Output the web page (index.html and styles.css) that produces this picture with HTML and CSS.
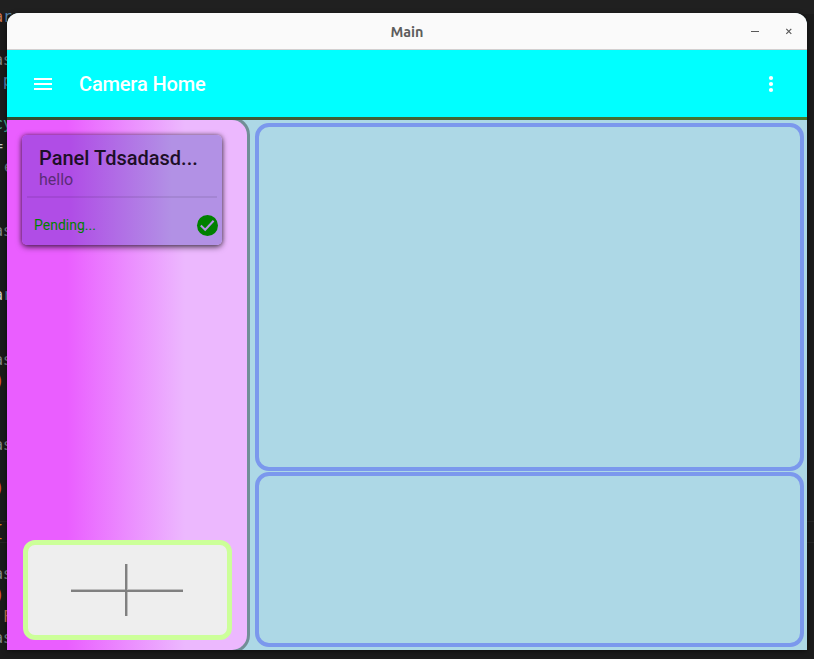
FILE: index.html
```html
<!DOCTYPE html>
<html lang="en">
<head>
<meta charset="utf-8">
<title>Main</title>
<link rel="stylesheet" href="styles.css">
</head>
<body>
<div class="editor" aria-hidden="true">
  <div class="line orange">a<b class="blue">r</b></div><div class="line"></div>
  <div class="line">as</div><div class="line light">:<b class="blue">p</b></div><div class="line"></div>
  <div class="line green">cy</div><div class="line light">=</div><div class="line indent">e</div>
  <div class="line"></div><div class="line"></div><div class="line">as</div>
  <div class="line"></div><div class="line"></div><div class="line light">a<b class="blue">r</b></div>
  <div class="line"></div><div class="line"></div><div class="line">as</div><div class="line orange paren">)</div>
  <div class="line"></div><div class="line"></div><div class="line">as</div>
  <div class="line"></div><div class="line orange paren">)</div><div class="line"></div>
  <div class="line gold current">{</div><div class="line"></div>
  <div class="line">as</div><div class="line orange paren">)</div><div class="line orange">'F</div><div class="line">as</div>
</div>
<main class="window">
  <header class="titlebar">
    <span class="title">Main</span>
    <svg class="controls" width="48" height="12" viewBox="0 0 48 12"><path d="M1 6.5h8" stroke="#595959"/><path d="M36.3 3.8l5 5M41.3 3.8l-5 5" fill="none" stroke="#595959" stroke-width="1.2"/></svg>
  </header>
  <nav class="toolbar">
    <svg width="24" height="24" viewBox="0 0 24 24" fill="#fff"><path d="M3 18h18v-2H3v2zm0-5h18v-2H3v2zm0-7v2h18V6H3z"/></svg>
    <h1>Camera Home</h1>
    <svg class="more" width="24" height="24" viewBox="0 0 24 24" fill="#fff"><circle cx="12" cy="6" r="2.1"/><circle cx="12" cy="12" r="2.1"/><circle cx="12" cy="18" r="2.1"/></svg>
  </nav>
  <div class="content">
    <aside class="sidebar">
      <article class="card">
        <h2>Panel Tdsadasd...</h2>
        <p>hello</p>
        <hr>
        <div class="status"><span>Pending...</span>
          <svg width="22" height="22" viewBox="0 0 22 22"><circle cx="11.5" cy="11.5" r="10.5" fill="#008000"/><path d="M4.8 11.5l4.4 4.3 8.4-9" fill="none" stroke="#b291e5" stroke-width="2"/></svg>
        </div>
      </article>
      <button class="add" aria-label="Add panel">
        <svg width="112" height="52" viewBox="0 0 112 52" fill="#808080"><path d="M54 0h2v52h-2zM0 26h112v2H0z"/><path d="M56 0h1v52h-1zM0 25h112v1H0z" opacity=".45"/></svg>
      </button>
    </aside>
    <section class="views">
      <div class="view large"></div>
      <div class="view"></div>
    </section>
  </div>
</main>
</body>
</html>
```
FILE: styles.css
```css
* { box-sizing: border-box; }
body {
  margin: 0;
  width: 814px;
  height: 659px;
  overflow: hidden;
  background: linear-gradient(#202020 0 14px, #1b1b1b 14px);
  font-family: Roboto, sans-serif;
  display: grid;
}
.editor {
  grid-area: 1 / 1;
  padding-top: 7px;
  overflow: hidden;
  height: 659px;
}
.line {
  height: 21.43px;
  line-height: 21.43px;
  text-indent: -6px;
  font-family: "DejaVu Sans Mono", monospace;
  font-size: 15px;
  color: #7d858a;
  white-space: pre;
}
.line b { font-weight: 400; }
.orange { color: #c87550; }
.paren { text-indent: -5px; color: #d0552a; }
.blue { color: #5585ad; }
.green { color: #45a892; }
.light { color: #c4c4c4; }
.gold { color: #d07c1a; }
.indent { text-indent: 4px; }
.current { box-shadow: inset 0 1px #252525, inset 0 -1px #252525; }
.window {
  grid-area: 1 / 1;
  margin: 13px 0 0 7px;
  width: 800px;
  height: 637px;
  display: flex;
  flex-direction: column;
  border-radius: 12px 12px 0 0;
  background: #add8e6;
  box-shadow: 0 1px 5px #0008;
  overflow: hidden;
  z-index: 1;
}
.titlebar {
  height: 37px;
  flex: none;
  background: #fafafa;
  border-bottom: 1px solid #d3cfcf;
  display: grid;
  grid-template-columns: 1fr auto 1fr;
  align-items: center;
}
.title {
  grid-column: 2;
  padding-top: 2px;
  font: 700 14.4px/20px Ubuntu, "Noto Sans", sans-serif;
  color: #5d5d5d;
}
.controls { justify-self: end; margin-right: 9px; }
.toolbar {
  height: 70px;
  flex: none;
  display: flex;
  align-items: center;
  padding: 0 24px;
  background: #00ffff;
  border-bottom: 3px solid #376b2c;
  border-image: linear-gradient(90deg, #304f30, #3d5b38 30%, #467b2f) 1;
}
.toolbar h1 {
  margin: 0 0 0 24px;
  font-size: 20px;
  font-weight: 500;
  letter-spacing: -0.15px;
  color: #fff;
}
.more { margin-left: auto; }
.content { flex: 1; display: flex; min-height: 0; overflow: hidden; }
.sidebar {
  width: 243px;
  flex: none;
  margin: -3px 0;
  padding: 15px 0 10px 15px;
  display: flex;
  flex-direction: column;
  justify-content: space-between;
  background: linear-gradient(90deg, #ea5eff 60px, #ecb8fe 178px);
  background-origin: border-box;
  border: solid #718e97;
  border-width: 3px 3px 3px 0;
  border-radius: 0 18px 18px 0;
}
.card {
  width: 200px;
  height: 110px;
  padding: 11px 5px 0;
  border-radius: 5px;
  background: linear-gradient(90deg, #b04de6 48px, #b291e5 150px);
  box-shadow: 0 2px 6px #0009, 0 0 4px #0006;
}
.card h2 {
  margin: 0 0 0 12px;
  font-size: 20px;
  line-height: 24px;
  font-weight: 500;
  color: #1d0f27;
  white-space: nowrap;
}
.card p {
  margin: 0 0 0 12px;
  font-size: 16px;
  line-height: 19px;
  color: #5b2c78;
}
.card hr {
  margin: 7px 0 0;
  border: 0;
  height: 2px;
  background: #00000014;
}
.status {
  height: 22px;
  margin: 16px -1px 0 7px;
  display: flex;
  align-items: center;
  justify-content: space-between;
  font-size: 14px;
  color: #008000;
}
.add {
  width: 209px;
  height: 100px;
  margin-left: .5px;
  padding: 0;
  border: 5px solid #ccff99;
  border-radius: 12px;
  background: #eee;
  display: grid;
  place-items: center;
}
.views {
  flex: 1;
  padding: 3px 3px 3px 5px;
  display: flex;
  flex-direction: column;
  gap: 1px;
}
.view {
  height: 175px;
  border: 4px solid #7b98ed;
  border-radius: 14px;
}
.large { height: 348px; }
```
